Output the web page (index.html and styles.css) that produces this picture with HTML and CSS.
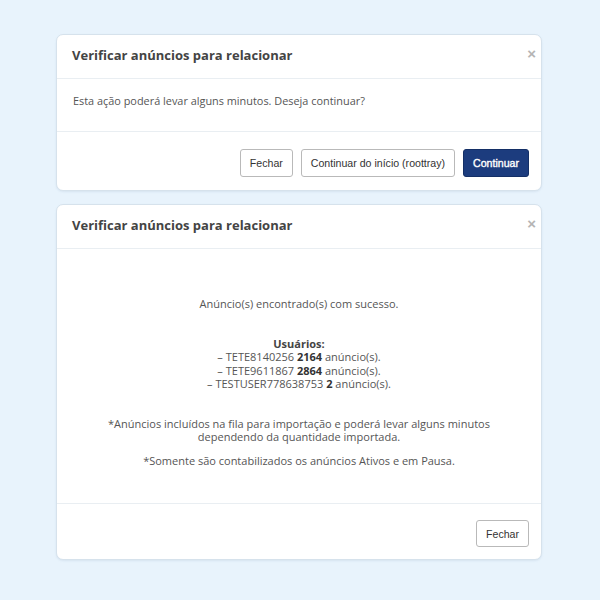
FILE: index.html
```html
<!DOCTYPE html>
<html lang="pt">
<head>
<meta charset="utf-8">
<link rel="stylesheet" href="styles.css">
</head>
<body>
<div class="page">
  <div class="modal">
    <div class="modal-header">
      <h4 class="title">Verificar anúncios para relacionar</h4>
      <span class="close">×</span>
    </div>
    <div class="modal-body small-body">
      <p>Esta ação poderá levar alguns minutos. Deseja continuar?</p>
    </div>
    <div class="modal-footer first-footer">
      <button class="btn">Fechar</button>
      <button class="btn">Continuar do início (roottray)</button>
      <button class="btn btn-primary">Continuar</button>
    </div>
  </div>

  <div class="modal">
    <div class="modal-header">
      <h4 class="title">Verificar anúncios para relacionar</h4>
      <span class="close">×</span>
    </div>
    <div class="modal-body result-body">
      <p class="found">Anúncio(s) encontrado(s) com sucesso.</p>
      <div class="users">
        <div class="users-title">Usuários:</div>
        <div>– TETE8140256 <b>2164</b> anúncio(s).</div>
        <div>– TETE9611867 <b>2864</b> anúncio(s).</div>
        <div>– TESTUSER778638753 <b>2</b> anúncio(s).</div>
      </div>
      <p class="note">*Anúncios incluídos na fila para importação e poderá levar alguns minutos<br>dependendo da quantidade importada.</p>
      <p class="note note2">*Somente são contabilizados os anúncios Ativos e em Pausa.</p>
    </div>
    <div class="modal-footer second-footer">
      <button class="btn">Fechar</button>
    </div>
  </div>
</div>
</body>
</html>
```

FILE: styles.css
```css
html, body {
  margin: 0;
  padding: 0;
}
body {
  background: #e8f3fc;
  width: 600px;
  height: 600px;
  font-family: "Open Sans", "Liberation Sans", sans-serif;
}
.page {
  padding: 34px 58px 0 56px;
  display: flex;
  flex-direction: column;
  gap: 13px;
}
.modal {
  background: #fff;
  border: 1px solid #d6e2ec;
  border-radius: 7px;
  box-shadow: 0 1px 2px rgba(120, 150, 180, 0.15);
}
.modal-header {
  display: flex;
  justify-content: space-between;
  align-items: center;
  padding: 0 5px 3px 15px;
  height: 40px;
  border-bottom: 1px solid #e9eef2;
}
.title {
  margin: 0;
  font-size: 13px;
  font-weight: 700;
  color: #444;
}
.close {
  font-family: "Liberation Sans", sans-serif;
  font-size: 15px;
  font-weight: 700;
  color: #b5b5b5;
  margin-top: -3px;
}
.modal-body {
  color: #555;
  font-size: 11px;
  line-height: 14px;
}
.modal-body p {
  margin: 0;
}
.small-body {
  padding: 15px 16px 23px;
  border-bottom: 1px solid #e9eef2;
  font-size: 10.9px;
}
.result-body {
  padding: 48px 15px 36px;
  text-align: center;
  border-bottom: 1px solid #e9eef2;
  line-height: 13.5px;
}
.users {
  margin-top: 26px;
}
.users-title {
  font-weight: 700;
  color: #444;
}
.users b {
  color: #333;
}
.note {
  margin-top: 26px !important;
}
.note2 {
  margin-top: 10px !important;
}
.modal-footer {
  display: flex;
  justify-content: flex-end;
  gap: 8px;
  padding: 0 12px;
}
.first-footer {
  padding-top: 17px;
  padding-bottom: 13px;
}
.second-footer {
  padding-top: 16px;
  padding-bottom: 12px;
}
.btn {
  font-family: "Liberation Sans", Arial, sans-serif;
  font-size: 10.6px;
  color: #333;
  background: #fff;
  border: 1px solid #b9b9b9;
  border-radius: 3px;
  height: 28px;
  padding: 0 9px;
  cursor: pointer;
}
.second-footer .btn {
  height: 27px;
}
.btn-primary {
  background: #1c3c7e;
  border-color: #142f66;
  color: #fff;
  -webkit-text-stroke: 0.35px #fff;
  padding: 0 9px;
}
```
